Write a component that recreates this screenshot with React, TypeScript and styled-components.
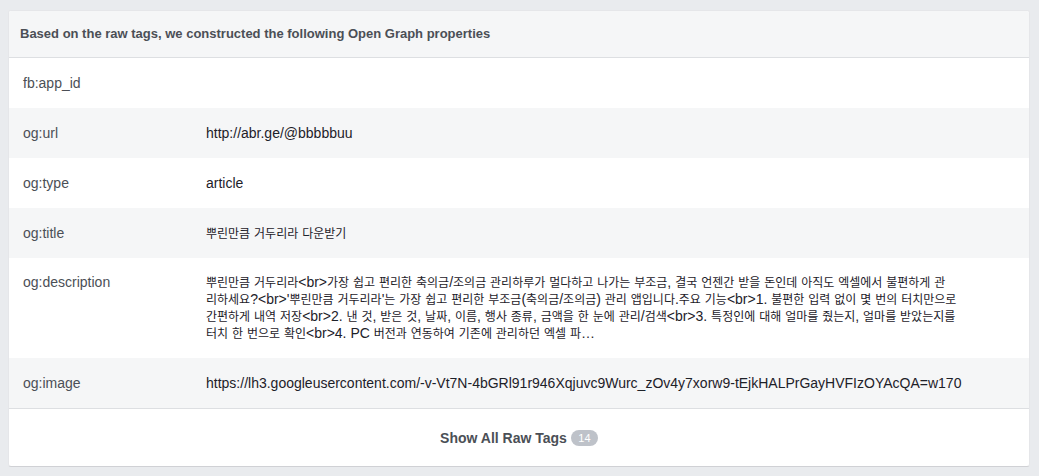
import React from "react";
import styled, { createGlobalStyle } from "styled-components";

const GlobalStyle = createGlobalStyle`
  html, body {
    margin: 0;
    padding: 0;
    background: #e9ebee;
  }
  body {
    font-family: "Liberation Sans", Arial, "Noto Sans CJK KR", sans-serif;
    -webkit-font-smoothing: antialiased;
  }
`;

const Page = styled.div`
  padding: 10px 9px 8px 8px;
`;

const Card = styled.section`
  display: flex;
  flex-direction: column;
  background: #ffffff;
  border: 1px solid #e5e6e9;
  border-bottom-color: #d0d1d5;
  border-radius: 3px;
  overflow: hidden;
`;

const Header = styled.header`
  background: #f5f6f7;
  border-bottom: 1px solid #dddfe2;
  padding: 15px 11px 15px;
  font-size: 13px;
  line-height: 16px;
  font-weight: bold;
  color: #4b4f56;
`;

const Row = styled.div<{ $shaded: boolean; $multi?: boolean }>`
  display: grid;
  grid-template-columns: 183px 1fr;
  padding: 16px 15px 16px 14px;
  background: ${(p) => (p.$shaded ? "#f5f6f7" : "#ffffff")};
  font-size: 14px;
  line-height: ${(p) => (p.$multi ? "17px" : "18px")};
`;

const Label = styled.div`
  color: #4b4f56;
  white-space: nowrap;
`;

const Value = styled.div`
  color: #1d2129;
  min-width: 0;
`;

const Line = styled.span`
  display: block;
  white-space: nowrap;
  height: 17px;
`;

const Hangul = styled.span`
  font-family: "Noto Sans CJK KR", sans-serif;
  font-size: 12px;
  line-height: 12px;
`;

const Footer = styled.footer`
  display: flex;
  align-items: center;
  justify-content: center;
  gap: 4px;
  border-top: 1px solid #dddfe2;
  height: 57px;
`;

const FooterLink = styled.span`
  font-size: 14px;
  font-weight: bold;
  color: #4b4f56;
  line-height: 18px;
`;

const Badge = styled.span`
  display: inline-flex;
  align-items: center;
  justify-content: center;
  min-width: 27px;
  height: 16px;
  padding: 0 5px;
  box-sizing: border-box;
  border-radius: 8px;
  background: #bec2c9;
  color: #ffffff;
  font-size: 11px;
  line-height: 16px;
  margin-top: 1px;
`;

const HANGUL_RE = /([\u1100-\u11FF\u3131-\u318E\uAC00-\uD7A3]+)/;

function renderText(text: string) {
  return text.split(HANGUL_RE).map((part, i) =>
    i % 2 === 1 ? <Hangul key={i}>{part}</Hangul> : <React.Fragment key={i}>{part}</React.Fragment>
  );
}

type Prop = { label: string; value?: string; lines?: string[] };

const props: Prop[] = [
  { label: "fb:app_id", value: "" },
  { label: "og:url", value: "http://abr.ge/@bbbbbuu" },
  { label: "og:type", value: "article" },
  { label: "og:title", value: "뿌린만큼 거두리라 다운받기" },
  {
    label: "og:description",
    lines: [
      "뿌린만큼 거두리라<br>가장 쉽고 편리한 축의금/조의금 관리하루가 멀다하고 나가는 부조금, 결국 언젠간 받을 돈인데 아직도 엑셀에서 불편하게 관",
      "리하세요?<br>'뿌린만큼 거두리라'는 가장 쉽고 편리한 부조금(축의금/조의금) 관리 앱입니다.주요 기능<br>1. 불편한 입력 없이 몇 번의 터치만으로",
      "간편하게 내역 저장<br>2. 낸 것, 받은 것, 날짜, 이름, 행사 종류, 금액을 한 눈에 관리/검색<br>3. 특정인에 대해 얼마를 줬는지, 얼마를 받았는지를",
      "터치 한 번으로 확인<br>4. PC 버전과 연동하여 기존에 관리하던 엑셀 파…",
    ],
  },
  {
    label: "og:image",
    value:
      "https://lh3.googleusercontent.com/-v-Vt7N-4bGRl91r946Xqjuvc9Wurc_zOv4y7xorw9-tEjkHALPrGayHVFIzOYAcQA=w170",
  },
];

export default function App() {
  return (
    <Page>
      <GlobalStyle />
      <Card>
        <Header>Based on the raw tags, we constructed the following Open Graph properties</Header>
        {props.map((p, i) => (
          <Row key={p.label} $shaded={i % 2 === 1} $multi={!!p.lines}>
            <Label>{p.label}</Label>
            <Value>
              {p.lines
                ? p.lines.map((l, j) => <Line key={j}>{renderText(l)}</Line>)
                : renderText(p.value || "")}
            </Value>
          </Row>
        ))}
        <Footer>
          <FooterLink>Show All Raw Tags</FooterLink>
          <Badge>14</Badge>
        </Footer>
      </Card>
    </Page>
  );
}
